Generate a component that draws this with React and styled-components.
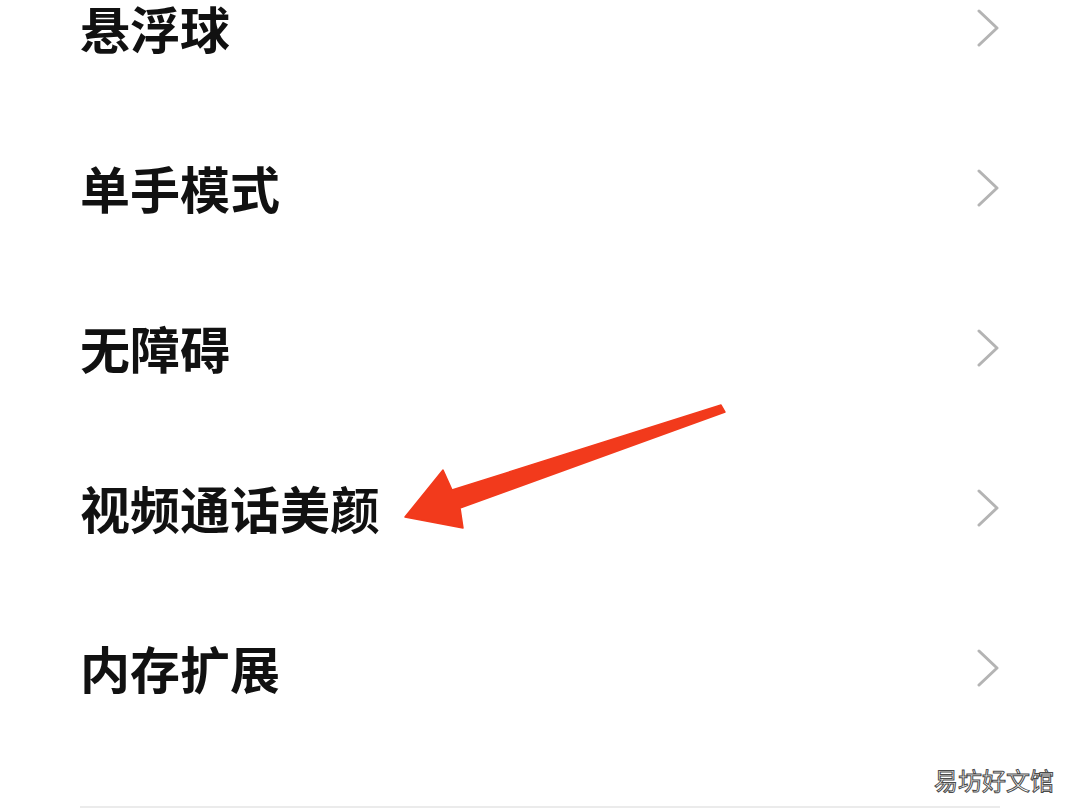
import React from "react";
import styled, { createGlobalStyle } from "styled-components";

const Global = createGlobalStyle`
  html, body { margin: 0; padding: 0; background: #ffffff; }
  body { font-family: "Noto Sans CJK SC", "Noto Sans", sans-serif; }
`;

const Page = styled.div`
  position: relative;
  width: 1080px;
  height: 810px;
  overflow: hidden;
  background: #ffffff;
`;

const List = styled.div`
  display: flex;
  flex-direction: column;
  margin-top: -52px;
  padding: 0 80px 0 80px;
`;

const Row = styled.div`
  height: 160px;
  display: flex;
  align-items: center;
  justify-content: space-between;
`;

const Label = styled.span`
  font-family: "Noto Sans CJK SC", sans-serif;
  font-size: 50px;
  font-weight: 600;
  color: #111111;
  line-height: 1;
  margin-top: -2px;
`;

const Divider = styled.div`
  margin: 58px 80px 0 80px;
  height: 2px;
  background: #ebebeb;
`;

const Watermark = styled.div`
  position: absolute;
  right: 26px;
  bottom: 18px;
  font-family: "Noto Sans CJK SC", sans-serif;
  font-size: 24px;
  font-weight: 400;
  color: #ffffff;
  -webkit-text-stroke: 1px #4a4a4a;
  line-height: 1;
`;

const Overlay = styled.svg`
  position: absolute;
  left: 0;
  top: 0;
  pointer-events: none;
`;

const Chevron = () => (
  <svg width="24" height="38" viewBox="0 0 24 38">
    <polyline
      points="3,2 21,19 3,36"
      fill="none"
      stroke="#b4b4b4"
      strokeWidth="3"
      strokeLinecap="round"
      strokeLinejoin="round"
    />
  </svg>
);

const items = ["悬浮球", "单手模式", "无障碍", "视频通话美颜", "内存扩展"];

export default function App() {
  return (
    <>
      <Global />
      <Page>
        <List>
          {items.map((t) => (
            <Row key={t}>
              <Label>{t}</Label>
              <Chevron />
            </Row>
          ))}
        </List>
        <Divider />
        <Overlay width="1080" height="810" viewBox="0 0 1080 810">
          <polygon
            points="405,517 443,470 452,490 721,405 725,412 460,508 463,528"
            fill="#f23a1c"
            stroke="#f23a1c"
            strokeWidth="1.5"
            strokeLinejoin="round"
          />
        </Overlay>
        <Watermark>易坊好文馆</Watermark>
      </Page>
    </>
  );
}
